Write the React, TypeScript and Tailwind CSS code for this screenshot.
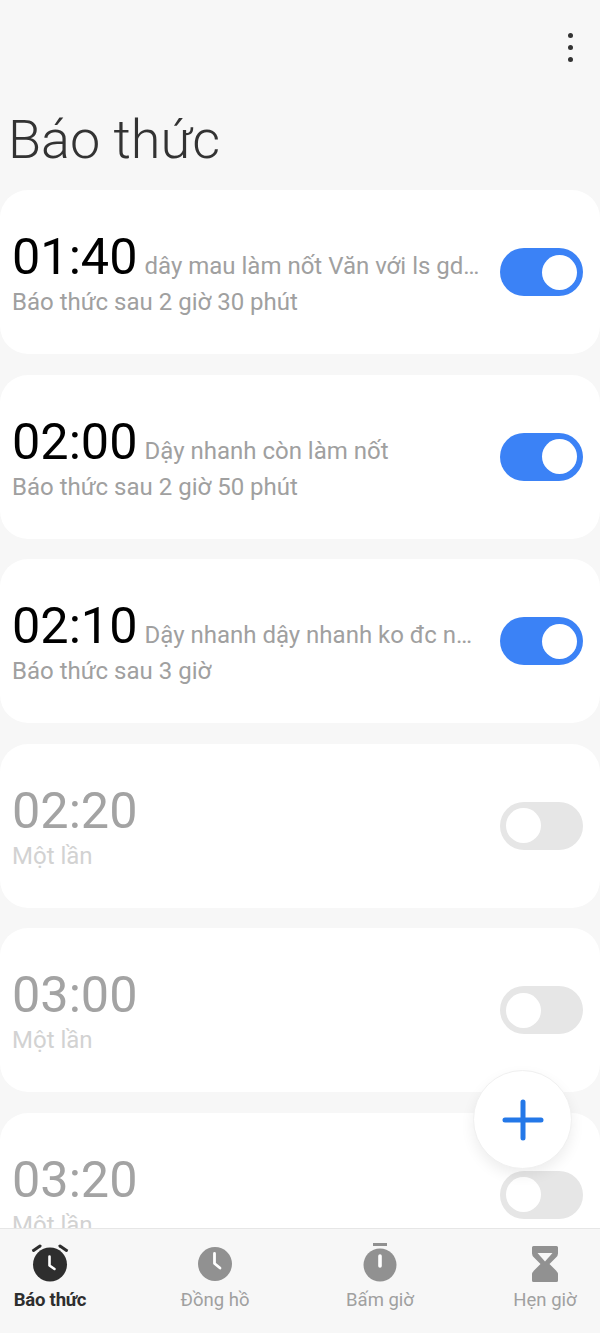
import React from "react";

type Alarm = { time: string; label?: string; sub: string; on: boolean };

const alarms: Alarm[] = [
  { time: "01:40", label: "dây mau làm nốt Văn với ls gd…", sub: "Báo thức sau 2 giờ 30 phút", on: true },
  { time: "02:00", label: "Dậy nhanh còn làm nốt", sub: "Báo thức sau 2 giờ 50 phút", on: true },
  { time: "02:10", label: "Dậy nhanh dậy nhanh ko đc n…", sub: "Báo thức sau 3 giờ", on: true },
  { time: "02:20", sub: "Một lần", on: false },
  { time: "03:00", sub: "Một lần", on: false },
  { time: "03:20", sub: "Một lần", on: false },
];

function Toggle({ on }: { on: boolean }) {
  return (
    <div
      className={
        on
          ? "flex h-[48px] w-[83px] items-center justify-end rounded-full bg-[#3b82f6] px-[6px]"
          : "flex h-[48px] w-[83px] items-center justify-start rounded-full bg-[#e6e6e6] px-[6px]"
      }
    >
      <div className="h-[35px] w-[35px] rounded-full bg-white" />
    </div>
  );
}

function AlarmCard({ a }: { a: Alarm }) {
  return (
    <div className="mb-[20.5px] flex h-[164px] shrink-0 items-center justify-between rounded-[28px] bg-white pl-[12px] pr-[17px]">
      <div className="min-w-0 pt-[1px]">
        <div className="flex items-baseline">
          <span className={a.on ? "text-[50.4px] leading-[58px] text-black" : "text-[50.4px] leading-[58px] text-[#a3a3a3]"}>{a.time}</span>
          {a.label && <span className="ml-[7px] whitespace-nowrap text-[24px] leading-[28px] text-[#a0a0a0]">{a.label}</span>}
        </div>
        <div className={a.on ? "mt-[1px] text-[24px] leading-[30px] text-[#a0a0a0]" : "mt-[1px] text-[24px] leading-[30px] text-[#d2d2d2]"}>{a.sub}</div>
      </div>
      <Toggle on={a.on} />
    </div>
  );
}

function AlarmIcon() {
  return (
    <svg width="40" height="42" viewBox="0 0 40 42">
      <circle cx="20" cy="22.5" r="17" fill="#2e2e2e" />
      <path d="M3.500 8.500 L10 4" stroke="#2e2e2e" strokeWidth="3" strokeLinecap="round" />
      <path d="M36.500 8.500 L30 4" stroke="#2e2e2e" strokeWidth="3" strokeLinecap="round" />
      <path d="M19.500 14.500 V23.500 L24.500 27" stroke="#fff" strokeWidth="2.600" fill="none" strokeLinecap="round" strokeLinejoin="round" />
    </svg>
  );
}

function ClockIcon() {
  return (
    <svg width="40" height="42" viewBox="0 0 40 42">
      <circle cx="20" cy="22" r="17" fill="#919191" />
      <path d="M19.500 11.500 V21.500 L25 26" stroke="#fff" strokeWidth="2.800" fill="none" strokeLinecap="round" strokeLinejoin="round" />
    </svg>
  );
}

function TimerIcon() {
  return (
    <svg width="40" height="42" viewBox="0 0 40 42">
      <rect x="13" y="1" width="14" height="3" fill="#919191" />
      <circle cx="20" cy="23" r="16.500" fill="#919191" />
      <path d="M20 14 V24" stroke="#fff" strokeWidth="3.600" strokeLinecap="round" />
    </svg>
  );
}

function HourglassIcon() {
  return (
    <svg width="40" height="42" viewBox="0 0 40 42">
      <path
        d="M7 5.500 Q7 4 8.500 4 H31.500 Q33 4 33 5.500 V11.500 Q33 13.500 31 15.500 L24.500 22 L31 28.500 Q33 30.500 33 32.500 V38.500 Q33 40 31.500 40 H8.500 Q7 40 7 38.500 V32.500 Q7 30.500 9 28.500 L15.500 22 L9 15.500 Q7 13.500 7 11.500 Z"
        fill="#919191"
      />
      <path d="M12.500 11 H27.500 L20 19.500 Z" fill="#f7f7f7" />
    </svg>
  );
}

function NavItem({ icon, label, active }: { icon: React.ReactNode; label: string; active?: boolean }) {
  return (
    <div className="flex flex-col items-center">
      <div className="flex h-[42px] items-center justify-center">{icon}</div>
      <div className={active ? "mt-[4px] whitespace-nowrap text-[18.500px] font-bold leading-[24px] tracking-[-0.200px] text-[#2e2e2e]" : "mt-[4px] whitespace-nowrap text-[18.500px] leading-[24px] text-[#a0a0a0]"}>
        {label}
      </div>
    </div>
  );
}

export default function App() {
  return (
    <div className="relative flex h-[1333px] w-[600px] flex-col overflow-hidden bg-[#f7f7f7] font-['Roboto',sans-serif]">
      <header className="h-[190px] shrink-0">
        <div className="flex h-[110px] justify-end pr-[27px] pt-[33px]">
          <div className="flex flex-col gap-[7px]">
            <div className="h-[5px] w-[5px] rounded-full bg-[#333]" />
            <div className="h-[5px] w-[5px] rounded-full bg-[#333]" />
            <div className="h-[5px] w-[5px] rounded-full bg-[#333]" />
          </div>
        </div>
        <h1 className="pl-[8px] text-[54px] font-light leading-[60px] text-[#333]">Báo thức</h1>
      </header>
      <main className="flex min-h-0 flex-1 flex-col overflow-hidden">
        {alarms.map((a) => (
          <AlarmCard key={a.time} a={a} />
        ))}
      </main>
      <nav className="relative h-[105px] shrink-0 border-t border-[#e6e6e6] bg-[#f7f7f7] pt-[13px]">
        <div className="ml-[-32.500px] grid w-[660px] grid-cols-4">
          <NavItem icon={<AlarmIcon />} label="Báo thức" active />
          <NavItem icon={<ClockIcon />} label="Đồng hồ" />
          <NavItem icon={<TimerIcon />} label="Bấm giờ" />
          <NavItem icon={<HourglassIcon />} label="Hẹn giờ" />
        </div>
      </nav>
      <div className="absolute left-[473px] top-[1070px] flex h-[99px] w-[99px] items-center justify-center rounded-full border border-[#f0f0f0] bg-white shadow-[0_6px_14px_rgba(0,0,0,0.07)]">
        <svg width="42" height="42" viewBox="0 0 42 42">
          <path d="M21 3 V39 M3 21 H39" stroke="#2478e8" strokeWidth="5" strokeLinecap="round" />
        </svg>
      </div>
    </div>
  );
}
